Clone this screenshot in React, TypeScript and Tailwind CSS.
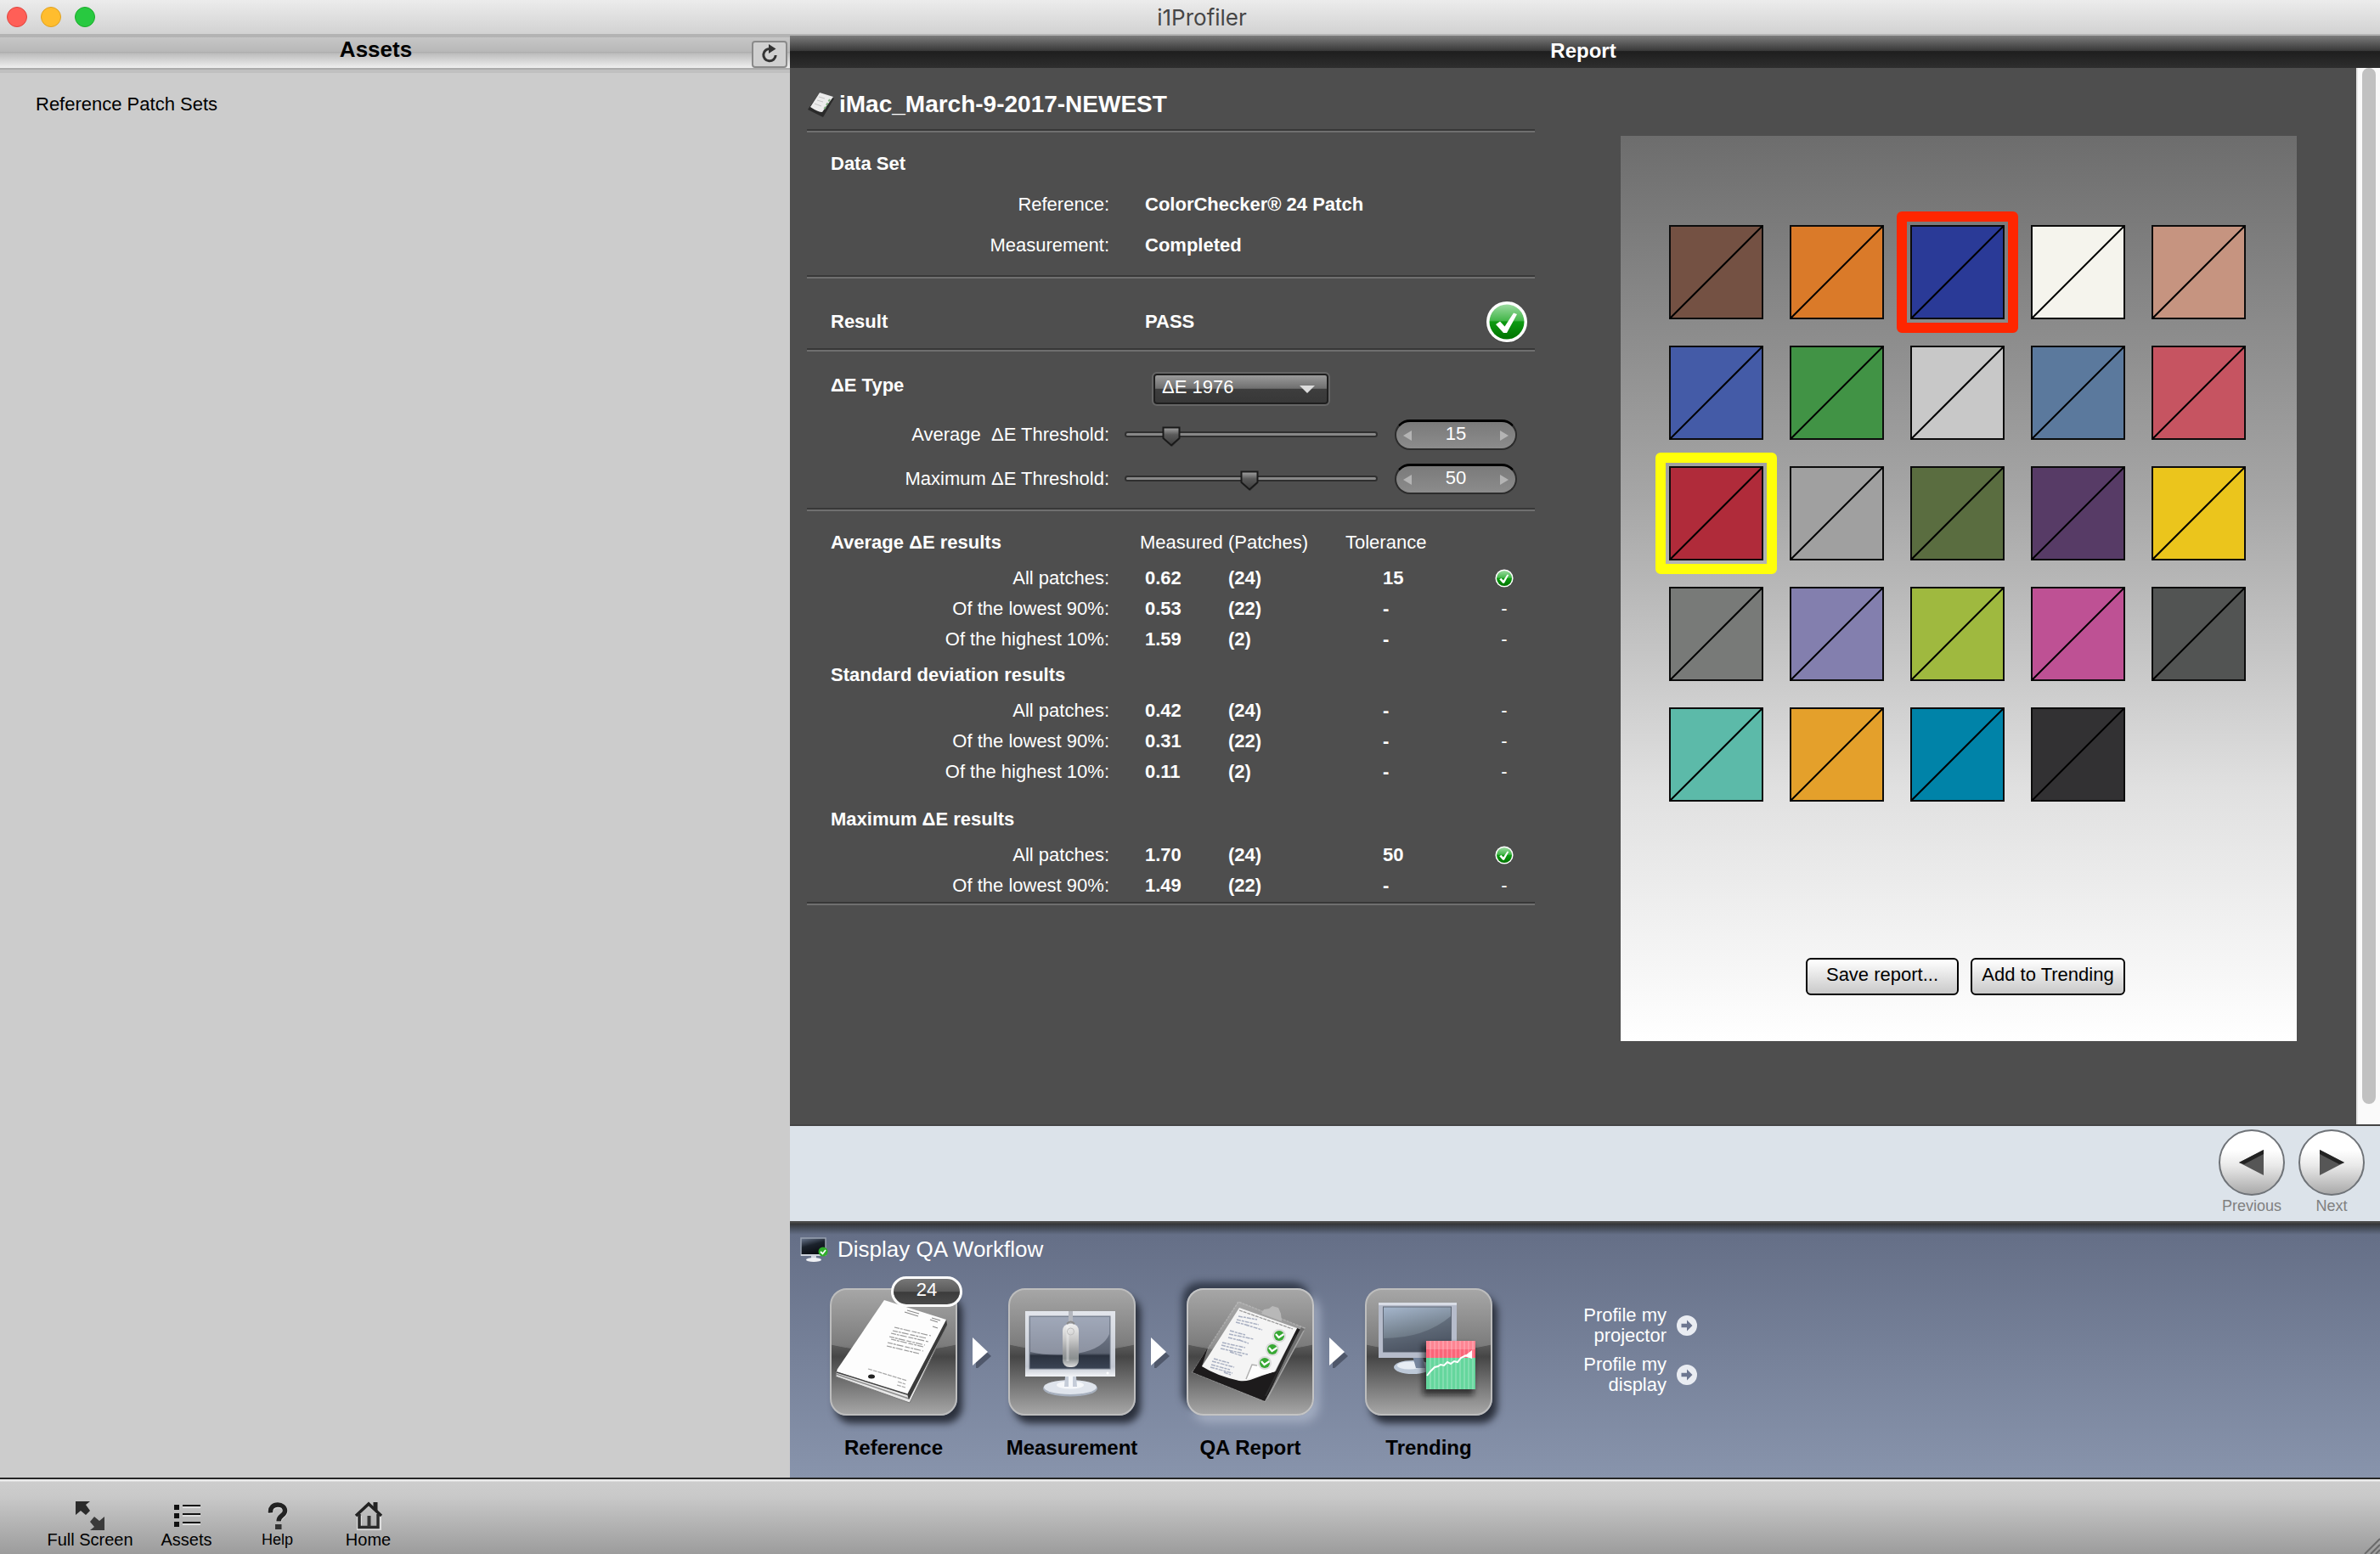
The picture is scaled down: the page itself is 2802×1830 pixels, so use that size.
import { useState } from "react";
import type { ReactNode } from "react";

/* ---------- data ---------- */

const PATCHES: { color: string; mark?: "red" | "yellow" }[] = [
  { color: "#745143" }, { color: "#da7a29" }, { color: "#2a3a97", mark: "red" }, { color: "#f5f4ed" }, { color: "#c69480" },
  { color: "#445ba7" }, { color: "#419345" }, { color: "#c8c8c8" }, { color: "#5b799d" }, { color: "#c65461" },
  { color: "#b02b3a", mark: "yellow" }, { color: "#a0a0a0" }, { color: "#5a6d40" }, { color: "#573b66" }, { color: "#ebc51c" },
  { color: "#787a78" }, { color: "#837fae" }, { color: "#9fb93f" }, { color: "#be5194" }, { color: "#525453" },
  { color: "#5cbaa9" }, { color: "#e4a02b" }, { color: "#0083a8" }, { color: "#323133" },
];

type Row = { label: string; value: string; count: string; tolerance: string; pass?: boolean };

const AVERAGE: Row[] = [
  { label: "All patches:", value: "0.62", count: "(24)", tolerance: "15", pass: true },
  { label: "Of the lowest 90%:", value: "0.53", count: "(22)", tolerance: "-" },
  { label: "Of the highest 10%:", value: "1.59", count: "(2)", tolerance: "-" },
];
const DEVIATION: Row[] = [
  { label: "All patches:", value: "0.42", count: "(24)", tolerance: "-" },
  { label: "Of the lowest 90%:", value: "0.31", count: "(22)", tolerance: "-" },
  { label: "Of the highest 10%:", value: "0.11", count: "(2)", tolerance: "-" },
];
const MAXIMUM: Row[] = [
  { label: "All patches:", value: "1.70", count: "(24)", tolerance: "50", pass: true },
  { label: "Of the lowest 90%:", value: "1.49", count: "(22)", tolerance: "-" },
];

/* ---------- small drawings ---------- */

function CheckBadge({ className, id }: { className: string; id: string }) {
  return (
    <svg viewBox="0 0 50 50" className={className} role="img" aria-label="Pass">
      <defs>
        <linearGradient id={id} x1="0" y1="0" x2="0" y2="1">
          <stop offset="0" stopColor="#9bdba0" />
          <stop offset="0.46" stopColor="#45b74b" />
          <stop offset="0.5" stopColor="#0d9a12" />
          <stop offset="1" stopColor="#007300" />
        </linearGradient>
      </defs>
      <circle cx="25" cy="27" r="23" fill="#000" opacity="0.3" />
      <circle cx="25" cy="25" r="24" fill="#fff" />
      <circle cx="25" cy="25" r="20.5" fill={`url(#${id})`} />
      <path d="M12 28l5-3.5 5.5 6L33 14.500l4 1.500-12 22h-4z" fill="#fff" />
    </svg>
  );
}

function RefreshIcon() {
  return (
    <svg viewBox="0 0 24 24" className="size-6">
      <path d="M13 5.500A7.200 7.200 0 1 0 19.200 13" fill="none" stroke="#333" strokeWidth="3" />
      <path d="M11 0l8.500 5.500L11 11z" fill="#333" />
    </svg>
  );
}

function ReportGlyph() {
  return (
    <svg viewBox="0 0 32 30" className="h-[30px] w-8">
      <path d="M15 1L1 21l18 9 13-22z" fill="#2a2a2a" />
      <path d="M15 1L4 18q9 6 14 6L31 6z" fill="#ececec" />
      <path d="M14 6l7 2M12 10l7 2M9 14l8 3" stroke="#c4c4c4" strokeWidth="1" />
      <path d="M27 9l-7 12" stroke="#7fae7f" strokeWidth="2" strokeDasharray="3 2" />
    </svg>
  );
}

function MonitorGlyph() {
  return (
    <svg viewBox="0 0 34 30" className="h-[30px] w-[34px]">
      <defs>
        <linearGradient id="mg" x1="0" y1="0" x2="0.4" y2="1">
          <stop offset="0" stopColor="#6d7a92" />
          <stop offset="0.5" stopColor="#1b222c" />
          <stop offset="1" stopColor="#0a0d12" />
        </linearGradient>
      </defs>
      <rect x="1" y="1" width="29" height="20" fill="url(#mg)" stroke="#98a1b0" strokeWidth="1.500" />
      <rect x="1" y="20" width="29" height="2" fill="#cfd4dd" />
      <path d="M13 22h6v3h-6z" fill="#cfd5de" />
      <ellipse cx="16" cy="26.500" rx="9" ry="2.500" fill="#eef0f4" />
      <circle cx="27" cy="17" r="5.500" fill="#2fae2b" />
      <path d="M24 17l2.500 2.500L30 15" fill="none" stroke="#fff" strokeWidth="1.800" />
    </svg>
  );
}

function ReferenceArt() {
  return (
    <svg viewBox="0 0 150 150" className="size-full">
      <path d="M8 98L91 125 137 37v8L94 135 7 104z" fill="#e6e6e6" stroke="#777" strokeWidth="1" />
      <path d="M7 101l86 29 45-88" fill="none" stroke="#8c8c8c" strokeWidth="1.500" />
      <path d="M91 125L137 37l1 6-45 88z" fill="#3a3a3a" />
      <path d="M64 14L137 37 91 125 7 98z" fill="#fdfdfd" />
      <path d="M88 28l16 5M91 26l14 4M118 37l9 3M120 35l10 3M121 45l6 2" stroke="#8b8b8b" strokeWidth="1.300" />
      <path d="M76 46l43 10M74 50l40 9M72 53l44 10M70 57l42 10M72 60l38 9M68 64l42 10M67 68l38 9" stroke="#9a9a9a" strokeWidth="1.200" strokeDasharray="6 1 3 1 8 2" />
      <path d="M45 95l46 14M80 110l9 3M79 114l10 3" stroke="#a9a9a9" strokeWidth="1.300" strokeDasharray="5 1" />
      <ellipse cx="49" cy="104" rx="4" ry="2.500" fill="#222" />
      <path d="M7 98l1-2M8 99l83 26" stroke="#444" strokeWidth="1.500" />
    </svg>
  );
}

function MeasurementArt() {
  return (
    <svg viewBox="0 0 150 150" className="size-full">
      <defs>
        <linearGradient id="scr" x1="0" y1="0" x2="0" y2="1">
          <stop offset="0" stopColor="#7c8698" />
          <stop offset="0.7" stopColor="#5b6270" />
          <stop offset="0.75" stopColor="#2b323f" />
          <stop offset="1" stopColor="#3b4454" />
        </linearGradient>
        <linearGradient id="frm" x1="0" y1="0" x2="0" y2="1">
          <stop offset="0" stopColor="#e3e6ec" />
          <stop offset="0.85" stopColor="#c2c7d1" />
          <stop offset="1" stopColor="#f2f4f7" />
        </linearGradient>
        <linearGradient id="dev" x1="0" y1="0" x2="0" y2="1">
          <stop offset="0" stopColor="#f0f0f0" />
          <stop offset="0.35" stopColor="#c9c9c9" />
          <stop offset="0.65" stopColor="#9a9c9e" />
          <stop offset="0.8" stopColor="#8a8f90" />
          <stop offset="1" stopColor="#dedede" />
        </linearGradient>
      </defs>
      <ellipse cx="73" cy="118" rx="32" ry="9.500" fill="#a7b0be" />
      <ellipse cx="73" cy="116.500" rx="31" ry="8.500" fill="#dfe4ec" />
      <ellipse cx="73" cy="114" rx="16" ry="4.500" fill="#f5f7fa" />
      <path d="M67 104h13l1 12H66z" fill="#c5ccd8" />
      <path d="M71 104h5v12h-5z" fill="#f4f6f9" />
      <rect x="20" y="27" width="106" height="77" fill="url(#frm)" />
      <rect x="25" y="33" width="95" height="62" fill="url(#scr)" stroke="#7b8290" strokeWidth="1" />
      <path d="M26 34h93v20q-8 20-46 24-28 2-47-3z" fill="#d7dcec" opacity="0.400" />
      <rect x="71" y="27" width="5" height="18" fill="#b4b7be" />
      <rect x="64" y="42" width="19" height="51" rx="8" fill="url(#dev)" />
      <path d="M70 44v42" stroke="#fff" strokeWidth="3" opacity="0.350" />
      <path d="M69 42q4.500-5 9 0" stroke="#8a8a8a" strokeWidth="2" fill="none" />
      <circle cx="73.500" cy="51" r="4" fill="none" stroke="#bcbcbc" />
      <circle cx="117" cy="100" r="1.500" fill="#fff" />
    </svg>
  );
}

function Tick({ x, y }: { x: number; y: number }) {
  return (
    <g>
      <circle cx={x} cy={y} r="8" fill="#dcdcdc" />
      <circle cx={x} cy={y} r="6" fill="#37a833" />
      <path d={`M${x - 4} ${y - 2}l3.500 4 6-4`} fill="none" stroke="#fff" strokeWidth="2.200" />
    </g>
  );
}

function QaArt() {
  return (
    <svg viewBox="0 0 150 150" className="size-full">
      <path d="M7 99L61 16l78 31-47 86z" fill="#b9b9b9" opacity="0.350" stroke="#e6e6e6" strokeWidth="1.500" strokeDasharray="3 1" />
      <path d="M88 30l3-5 6-1 4-3 7 2 3 7 1 9z" fill="#b8b8b8" />
      <path d="M7 99L25 70 18 92 62 109 105 98 130 47 137 50 92 133z" fill="#1d1b1c" />
      <path d="M92 133L139 48l-4-2-13 24-25 54z" fill="#6f6f6f" />
      <path d="M95 130l43-80" stroke="#a5a5a5" strokeWidth="1.500" />
      <path d="M93 127l36-72" stroke="#2c2c2c" strokeWidth="2" />
      <path d="M62 23l68 24-26 51q-16 5-29 10-7 2-13 1Q35 103 18 92z" fill="#f4f4f4" />
      <path d="M62 26l63 22" stroke="#999" strokeWidth="1.300" strokeDasharray="4 1" />
      <path d="M70 107l7-17q12 2 27 8-18 5-34 9z" fill="#fdfdfd" />
      <path d="M70 107l7-17 6 1" fill="none" stroke="#b0b0b0" strokeWidth="1.500" />
      <path
        d="M61 33l22 4M59 37l26 6M58 40l16 4M69 43l20 6M51 50l18 5M50 54l29 6M49 58l16 4M62 61l11 4M42 64l27 6M41 67l24 6M40 71l32 7M51 75l15 5M32 83l18 5M30 86l26 7M29 90l22 6M28 93l26 7M44 99l8 3"
        stroke="#a9b0c2"
        strokeWidth="1.500"
        strokeDasharray="5 1 3 1"
      />
      <Tick x={109} y={56} />
      <Tick x={101} y={72} />
      <Tick x={92} y={88} />
    </svg>
  );
}

function TrendingArt() {
  return (
    <svg viewBox="0 0 150 150" className="size-full">
      <defs>
        <linearGradient id="ts" x1="0" y1="0" x2="0.3" y2="1">
          <stop offset="0" stopColor="#a6b7cd" />
          <stop offset="0.6" stopColor="#75828f" />
          <stop offset="1" stopColor="#565f6d" />
        </linearGradient>
        <filter id="soft" x="-30%" y="-30%" width="160%" height="160%">
          <feGaussianBlur stdDeviation="3" />
        </filter>
      </defs>
      <ellipse cx="56" cy="93" rx="22" ry="8" fill="#bdc9d8" />
      <ellipse cx="52" cy="91" rx="14" ry="4.500" fill="#e7edf4" />
      <path d="M56 80h12l3 14H60z" fill="#76869e" />
      <rect x="16" y="17" width="92" height="65" fill="#b6bccb" />
      <rect x="16" y="17" width="92" height="3" fill="#d9dde6" />
      <rect x="21.500" y="22" width="80" height="53" fill="url(#ts)" stroke="#5f6775" strokeWidth="1" />
      <path d="M22 59q48 0 79-26v42H22z" fill="#3e4654" opacity="0.400" />
      <rect x="68" y="66" width="60" height="60" fill="#111" opacity="0.650" filter="url(#soft)" />
      <rect x="72" y="62" width="58" height="20" fill="#fb6579" />
      <rect x="72" y="62" width="58" height="10" fill="#fd8593" />
      <rect x="72" y="82" width="58" height="37" fill="#65d69d" />
      <path d="M77 62v57M82 62v57M87 62v57M92 62v57M97 62v57M102 62v57M107 62v57M112 62v57M117 62v57M122 62v57M127 62v57" stroke="#fff" strokeWidth="1.500" opacity="0.250" />
      <path d="M73 103l4-5 5-5 4-1 3-2 4 1 4-4 4 2 4-3 4 1 4-5 6-3" fill="none" stroke="#fff" strokeWidth="2" />
      <path d="M117 80l9-7v10z" fill="#fff" />
    </svg>
  );
}

function CircleArrow() {
  return (
    <svg viewBox="0 0 24 24" className="size-6 shrink-0">
      <circle cx="12" cy="12" r="12" fill="#e9ecf2" />
      <path d="M5.500 9.800H12V5.500l6.500 6.500-6.500 6.500v-4.300H5.500z" fill="#6c7690" />
    </svg>
  );
}

/* ---------- building blocks ---------- */

function Rule() {
  return <div className="h-1 border-y-2 border-t-[#383838] border-b-[#6f6f6f]" />;
}

function Patch({ color, mark, index }: { color: string; mark?: "red" | "yellow"; index: number }) {
  return (
    <li className="relative size-[111px]" aria-label={`Patch ${index + 1}`}>
      <svg viewBox="0 0 111 111" className="size-full">
        <rect x="1" y="1" width="109" height="109" fill={color} stroke="#0c0c0c" strokeWidth="2" />
        <path d="M1 110L110 1" stroke="#000" strokeWidth="2" />
      </svg>
      {mark === "red" && <span className="absolute -inset-4 rounded-md border-[12px] border-[#ff2600]" />}
      {mark === "yellow" && <span className="absolute -inset-4 rounded-md border-[12px] border-[#ffff0a]" />}
    </li>
  );
}

function Threshold({ id, label, initial }: { id: string; label: string; initial: number }) {
  const [value, setValue] = useState(initial);
  const clamp = (n: number) => setValue(Math.max(0, Math.min(100, Number.isNaN(n) ? 0 : n)));
  return (
    <div className="flex h-9 items-center">
      <label htmlFor={id} className="w-[356px] text-right whitespace-pre">{label}</label>
      <div className="relative ml-[18px] h-9 w-[298px]">
        <div className="absolute inset-x-0 top-[14px] h-[7px] rounded-full border-2 border-[#2f2f2f] bg-[#888]" />
        <svg
          viewBox="0 0 24 26"
          className="absolute top-2 h-[26px] w-6 -translate-x-1/2"
          style={{ left: `calc(16px + ${value * 0.88}%)` }}
        >
          <defs>
            <linearGradient id={`${id}-thumb`} x1="0" y1="0" x2="0" y2="1">
              <stop offset="0" stopColor="#a5a5a5" />
              <stop offset="0.4" stopColor="#5a5a5a" />
              <stop offset="1" stopColor="#3c3c3c" />
            </linearGradient>
          </defs>
          <path d="M4 4h18v11l-9 9-9-9z" fill="#000" opacity="0.250" />
          <path d="M2.500 1.500h19V14L12 22.500 2.500 14z" fill={`url(#${id}-thumb)`} stroke="#1a1a1a" strokeWidth="2" />
        </svg>
        <input
          id={id}
          type="range"
          min={0}
          max={100}
          value={value}
          onChange={(e) => clamp(e.target.valueAsNumber)}
          className="absolute inset-0 size-full cursor-pointer opacity-0"
        />
      </div>
      <div className="ml-5 flex h-9 w-36 items-center justify-between rounded-full border-2 border-t-[3px] border-[#2c2c2c] border-t-black bg-[linear-gradient(to_bottom,#7a7a7a,#8c8c8c)] px-2">
        <button type="button" aria-label={`Decrease ${label}`} onClick={() => clamp(value - 1)}>
          <svg viewBox="0 0 10 12" className="h-3 w-[10px]"><path d="M10 0v12L0 6z" fill="#b4b4b4" /></svg>
        </button>
        <input
          type="text"
          inputMode="numeric"
          aria-label={label}
          value={value}
          onChange={(e) => clamp(parseInt(e.target.value, 10))}
          className="w-16 bg-transparent pb-1 text-center leading-6 text-white outline-none"
        />
        <button type="button" aria-label={`Increase ${label}`} onClick={() => clamp(value + 1)}>
          <svg viewBox="0 0 10 12" className="h-3 w-[10px]"><path d="M0 0v12l10-6z" fill="#b4b4b4" /></svg>
        </button>
      </div>
    </div>
  );
}

function ResultRows({ rows, prefix }: { rows: Row[]; prefix: string }) {
  return (
    <>
      {rows.map((r, i) => (
        <tr key={r.label} className="h-9">
          <th scope="row" className="text-right font-normal">{r.label}</th>
          <td className="pl-[42px] font-bold">{r.value}</td>
          <td className="font-bold">{r.count}</td>
          <td className="pl-11 font-bold">{r.tolerance}</td>
          <td className="text-center">
            {r.pass ? <CheckBadge id={`${prefix}-${i}`} className="mx-auto size-[22px]" /> : "-"}
          </td>
        </tr>
      ))}
    </>
  );
}

function Step({ label, active, badge, children }: { label: string; active?: boolean; badge?: string; children: ReactNode }) {
  return (
    <button type="button" aria-current={active ? "step" : undefined} className="flex w-[150px] flex-col items-center gap-6">
      <span
        className={
          active
            ? "relative block size-[150px] rounded-[20px] border-2 border-[#c4c4c4] bg-[radial-gradient(ellipse_110%_50%_at_50%_0,#0000_99%,#0004_100%),linear-gradient(to_bottom,#a6a6a6,#7d7d7d_44%,#5f5f5f_54%,#8d8d8d_70%,#e2e2e2)] shadow-[-5px_-7px_9px_#343c4c,6px_8px_12px_#a3adc2]"
            : "relative block size-[150px] rounded-[20px] border-2 border-[#bdbdbd] bg-[radial-gradient(ellipse_110%_50%_at_50%_0,#0000_99%,#0004_100%),linear-gradient(to_bottom,#a6a6a6,#7d7d7d_44%,#5f5f5f_54%,#8d8d8d_70%,#e2e2e2)] shadow-[6px_9px_9px_#2b303c]"
        }
      >
        <span className="absolute -inset-0.5">{children}</span>
        {badge && (
          <span className="absolute -top-4 left-[70px] h-9 w-[84px] rounded-full border-[3px] border-white bg-[linear-gradient(to_bottom,#777,#5a5a5a_50%,#3c3c3c_52%,#4a4a4a)] text-[22px] leading-[26px] text-white">
            {badge}
          </span>
        )}
      </span>
      <span className="text-2xl leading-7 font-bold whitespace-nowrap text-black">{label}</span>
    </button>
  );
}

function StepArrow() {
  return (
    <svg viewBox="0 0 60 40" className="mt-[54px] h-10 w-[60px] shrink-0">
      <path d="M22 9l18 17-18 16z" fill="#1e2430" opacity="0.450" />
      <path d="M18 4l18 17-18 16z" fill="#fff" />
    </svg>
  );
}

function SideLink({ first, second }: { first: string; second: string }) {
  return (
    <a href="#" className="flex items-center gap-3 text-[22px] leading-6 text-white">
      <span className="w-[100px] text-right">
        {first}
        <br />
        {second}
      </span>
      <CircleArrow />
    </a>
  );
}

/* ---------- page ---------- */

export default function App() {
  return (
    <div className="flex min-h-screen flex-col bg-[#cccccc] font-['Liberation_Sans',Arial,sans-serif] text-[22px] leading-7 text-black">
      {/* window title bar */}
      <header className="relative flex h-[42px] shrink-0 items-center justify-center border-b-2 border-[#b3b3b3] bg-[linear-gradient(to_bottom,#ececec,#d2d2d2)]">
        <div className="absolute left-2 flex gap-4">
          <button type="button" aria-label="Close" className="size-6 rounded-full border border-[#e0443e] bg-[#ff5f57]" />
          <button type="button" aria-label="Minimize" className="size-6 rounded-full border border-[#dea123] bg-[#ffbd2e]" />
          <button type="button" aria-label="Zoom" className="size-6 rounded-full border border-[#1aab29] bg-[#28c940]" />
        </div>
        <h1 className="pt-0.5 pl-7 font-[Inter,sans-serif] text-[26px] leading-8 text-[#464646]">i1Profiler</h1>
      </header>

      <div className="flex flex-1">
        {/* assets */}
        <aside className="w-[930px] shrink-0">
          <div className="flex h-10 items-end border-y-2 border-t-[#b3b3b3] border-b-[#ababab] bg-[linear-gradient(to_bottom,#c6c6c6,#b8b8b8_47%,#acacac_48%,#bebebe_54%,#efefef)] pr-[3px]">
            <h2 className="flex-1 self-center pb-2 text-center text-[26px] leading-7 font-bold">Assets</h2>
            <button type="button" aria-label="Refresh" className="flex h-8 w-[42px] items-center justify-center rounded border-2 border-[#8a8a8a] bg-[#d0d0d0]">
              <RefreshIcon />
            </button>
          </div>
          <div className="h-1 bg-[#c0c0c0]" />
          <p className="px-[42px] pt-[23px]">Reference Patch Sets</p>
        </aside>

        <main className="flex min-w-0 flex-1 flex-col">
          <div className="h-[38px] shrink-0 bg-[linear-gradient(to_bottom,#7c7c7c,#3a3a3a_46%,#1e1e1e_49%,#2e2e2e)] pt-1 pr-1 text-center text-2xl leading-7 font-bold text-white">
            Report
          </div>

          <div className="flex flex-1 border-b-2 border-[#444] bg-[#4e4e4e] text-white">
            <section className="ml-5 w-[857px] shrink-0">
              <div className="flex items-center gap-1.5 pt-[23px] pb-[9px]">
                <ReportGlyph />
                <h2 className="text-[28px] leading-10 font-bold">iMac_March-9-2017-NEWEST</h2>
              </div>
              <Rule />
              <div className="pt-[13px] pb-[11px]">
                <h3 className="pl-7 leading-[48px] font-bold">Data Set</h3>
                <dl className="grid grid-cols-[356px_1fr] gap-x-[42px] leading-[48px]">
                  <dt className="text-right">Reference:</dt>
                  <dd className="font-bold">ColorChecker® 24 Patch</dd>
                  <dt className="text-right">Measurement:</dt>
                  <dd className="font-bold">Completed</dd>
                </dl>
              </div>
              <Rule />
              <div className="flex h-[82px] items-center pt-5 pr-2 pl-7 font-bold">
                <h3 className="w-[370px]">Result</h3>
                <p className="flex-1">PASS</p>
                <CheckBadge id="big" className="size-[50px]" />
              </div>
              <Rule />
              <div className="flex flex-col gap-4 pt-[26px] pb-4">
                <div className="flex h-[38px] items-start">
                  <label htmlFor="de-type" className="w-[408px] pl-7 font-bold">ΔE Type</label>
                  <div className="relative w-[206px]">
                    <select
                      id="de-type"
                      className="h-9 w-full appearance-none rounded border-2 border-[#1f1f1f] bg-[linear-gradient(to_bottom,#9b9b9b,#6f6f6f_48%,#3d3d3d_50%,#383838)] pb-2 pl-2 text-white outline-2 outline-[#666]"
                    >
                      <option>ΔE 1976</option>
                      <option>ΔE 1994</option>
                      <option>ΔE 2000</option>
                    </select>
                    <svg viewBox="0 0 18 9" className="pointer-events-none absolute top-[14px] right-4 h-[9px] w-[18px]">
                      <path d="M0 0h18L9 9z" fill="#dcdcdc" />
                    </svg>
                  </div>
                </div>
                <Threshold id="avg" label="Average  ΔE Threshold:" initial={15} />
                <Threshold id="max" label="Maximum ΔE Threshold:" initial={50} />
              </div>
              <Rule />
              <table className="mt-[13px] mb-px w-full table-fixed border-collapse text-left">
                <colgroup>
                  <col className="w-[356px]" />
                  <col className="w-[140px]" />
                  <col className="w-[138px]" />
                  <col className="w-[151px]" />
                  <col className="w-[72px]" />
                </colgroup>
                <tbody>
                  <tr className="h-12">
                    <th scope="rowgroup" className="pl-7 font-bold">Average ΔE results</th>
                    <th scope="col" colSpan={2} className="pl-9 font-normal">Measured (Patches)</th>
                    <th scope="col" className="font-normal">Tolerance</th>
                    <td />
                  </tr>
                  <ResultRows rows={AVERAGE} prefix="avg-row" />
                </tbody>
                <tbody>
                  <tr className="h-12">
                    <th scope="rowgroup" colSpan={5} className="pl-7 font-bold">Standard deviation results</th>
                  </tr>
                  <ResultRows rows={DEVIATION} prefix="dev-row" />
                </tbody>
                <tbody>
                  <tr className="h-[62px]">
                    <th scope="rowgroup" colSpan={5} className="pt-[14px] pl-7 font-bold">Maximum ΔE results</th>
                  </tr>
                  <ResultRows rows={MAXIMUM} prefix="max-row" />
                </tbody>
              </table>
              <Rule />
            </section>

            <section className="mt-20 mr-[70px] mb-24 ml-[101px] flex-1 self-start bg-[linear-gradient(to_bottom,#6d6d6d,#a6a6a6_40%,#e0e0e0_72%,#fff)] pt-[105px] pb-[54px]">
              <ul className="mx-auto grid w-fit grid-cols-5 gap-[31px] pr-1">
                {PATCHES.map((p, i) => (
                  <Patch key={p.color} color={p.color} mark={p.mark} index={i} />
                ))}
              </ul>
              <div className="mt-[184px] flex justify-center gap-[14px] pl-4 text-black">
                <button type="button" className="h-11 w-[180px] rounded-md border-2 border-black bg-[linear-gradient(to_bottom,#fff,#c9c9c9)] pb-1">
                  Save report...
                </button>
                <button type="button" className="h-11 w-[182px] rounded-md border-2 border-black bg-[linear-gradient(to_bottom,#fff,#c9c9c9)] pb-1">
                  Add to Trending
                </button>
              </div>
            </section>

            <div className="flex w-7 shrink-0 justify-center border-l-2 border-[#e6e6e6] bg-[#fafafa]">
              <div className="mb-6 w-4 rounded-full bg-[#c1c1c1]" />
            </div>
          </div>

          {/* step navigation */}
          <nav className="flex h-28 shrink-0 justify-end gap-4 bg-[#dce3ea] pt-1 pr-[18px] text-lg leading-5 text-[#808080]">
            <button type="button" className="flex w-[78px] flex-col items-center gap-0.5">
              <span className="flex size-[78px] items-center justify-center rounded-full border-2 border-[#6f7378] bg-[linear-gradient(to_bottom,#fff_30%,#e9e9e9_55%,#a9a9a9)]">
                <svg viewBox="0 0 30 30" className="size-[30px]">
                  <path d="M29 0v30L0 15z" fill="#565656" />
                  <path d="M29 0v5L6 17l-6-2z" fill="#222" />
                </svg>
              </span>
              Previous
            </button>
            <button type="button" className="flex w-[78px] flex-col items-center gap-0.5">
              <span className="flex size-[78px] items-center justify-center rounded-full border-2 border-[#6f7378] bg-[linear-gradient(to_bottom,#fff_30%,#e9e9e9_55%,#a9a9a9)]">
                <svg viewBox="0 0 30 30" className="size-[30px]">
                  <path d="M1 0v30l29-15z" fill="#565656" />
                  <path d="M1 0v5l23 12 6-2z" fill="#222" />
                </svg>
              </span>
              Next
            </button>
          </nav>

          {/* workflow */}
          <section className="h-[302px] shrink-0 bg-[linear-gradient(to_bottom,#4a4a4a_2px,#333537_3px,#4c5464_10px,#656f87_16px,#8894ac)] pt-[18px] pl-3">
            <div className="flex h-8 items-center gap-2.5 text-white">
              <MonitorGlyph />
              <h2 className="pb-0.5 text-[26px] leading-8">Display QA Workflow</h2>
            </div>
            <div className="mt-[29px] flex items-start pl-[35px]">
              <Step label="Reference" badge="24"><ReferenceArt /></Step>
              <StepArrow />
              <Step label="Measurement"><MeasurementArt /></Step>
              <StepArrow />
              <Step label="QA Report" active><QaArt /></Step>
              <StepArrow />
              <Step label="Trending"><TrendingArt /></Step>
              <div className="mt-5 ml-[105px] flex flex-col gap-[10px]">
                <SideLink first="Profile my" second="projector" />
                <SideLink first="Profile my" second="display" />
              </div>
            </div>
          </section>
        </main>
      </div>

      {/* toolbar */}
      <footer className="relative flex h-[90px] shrink-0 border-t-2 border-[#262626] bg-[linear-gradient(to_bottom,#ececec_2px,#cdcdcd_3px,#c9c9c9_20px,#9c9c9c)] pt-[26px] pl-[46px] text-xl leading-[22px]">
        <button type="button" className="flex w-[120px] flex-col items-center">
          <svg viewBox="0 0 34 34" className="size-[34px]">
            <path d="M0 0h17l-5 4 5 7-5 5-6-5-6 5z" fill="#2b2b2b" />
            <path d="M34 34H17l5-4-5-6 5-6 6 5 6-5z" fill="#3a3a3a" />
          </svg>
          Full Screen
        </button>
        <button type="button" className="flex w-[107px] flex-col items-center">
          <svg viewBox="0 0 34 34" className="size-[34px]">
            <path d="M2 4h6v6H2zM2 14h6v6H2zM2 24h6v6H2z" fill="#111" />
            <path d="M12 5h21M12 15h21M12 25h21" stroke="#111" strokeWidth="2" />
            <path d="M12 7h21M12 17h21M12 27h21" stroke="#dedede" strokeWidth="2" />
          </svg>
          Assets
        </button>
        <button type="button" className="flex w-[107px] flex-col items-center text-lg leading-[22px]">
          <svg viewBox="0 0 34 34" className="size-[34px]">
            <path d="M8.500 14.500C8 8 12 4.500 17 4.500s8.500 3 8.500 7c0 6-7.500 5.500-7.500 12.500" fill="none" stroke="#e0e0e0" strokeWidth="6.500" />
            <path d="M8.500 13.500C8 7 12 4 17 4s8.500 3 8.500 7c0 6-7.500 5.500-7.500 12.500" fill="none" stroke="#222" strokeWidth="5.500" />
            <rect x="14" y="27" width="7.500" height="6" fill="#333" />
          </svg>
          Help
        </button>
        <button type="button" className="flex w-[107px] flex-col items-center">
          <svg viewBox="0 0 34 34" className="size-[34px]">
            <path d="M6 17v15h23V17" fill="none" stroke="#dedede" strokeWidth="6" />
            <path d="M2 17L17 3l15 14" fill="none" stroke="#222" strokeWidth="3.500" />
            <path d="M6 15v15.500h22V15" fill="none" stroke="#2b2b2b" strokeWidth="3.500" />
            <path d="M22.500 1h5v10l-5-4z" fill="#222" />
            <path d="M15.500 17h4v13h-4z" fill="#333" />
          </svg>
          Home
        </button>
        <svg viewBox="0 0 20 20" className="absolute right-0 bottom-0 size-5">
          <path d="M2 20L20 2M9 20L20 9M15 20l5-5" stroke="#6b6b6b" strokeWidth="2" />
        </svg>
      </footer>
    </div>
  );
}
